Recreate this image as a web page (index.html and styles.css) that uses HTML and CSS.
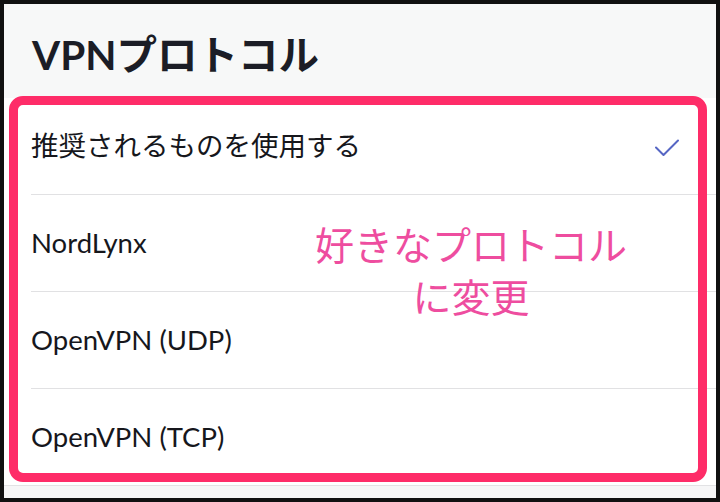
FILE: index.html
```html
<!DOCTYPE html>
<html lang="ja">
<head>
<meta charset="utf-8">
<title>VPNプロトコル</title>
<link rel="stylesheet" href="styles.css">
</head>
<body>
<div class="frame">
  <header class="header">
    <h1 class="title">VPNプロトコル</h1>
  </header>
  <ul class="list">
    <li class="row">
      <span class="label">推奨されるものを使用する</span>
      <svg class="check" width="24" height="17" viewBox="0 0 24 17" aria-hidden="true">
        <path d="M1 8.5 L8.5 16 L23 1.5" fill="none" stroke="#5666c4" stroke-width="2" stroke-linecap="round" stroke-linejoin="round"/>
      </svg>
    </li>
    <li class="row"><span class="label">NordLynx</span></li>
    <li class="row"><span class="label">OpenVPN (UDP)</span></li>
    <li class="row row-last"><span class="label">OpenVPN (TCP)</span></li>
  </ul>
  <div class="footer"></div>
  <div class="highlight"></div>
  <div class="note">好きなプロトコル<br>に変更</div>
</div>
</body>
</html>
```
FILE: styles.css
```css
html, body {
  margin: 0;
  padding: 0;
  background: #111;
}
.frame {
  position: relative;
  width: 720px;
  height: 502px;
  box-sizing: border-box;
  border: 4px solid #111;
  background: #f6f6f7;
  display: flex;
  flex-direction: column;
  overflow: hidden;
  font-family: Lato, "Noto Sans CJK JP", sans-serif;
}
.header {
  height: 94px;
  box-sizing: border-box;
  padding: 7px 0 0 28px;
  background: #f7f8f8;
  display: flex;
  align-items: center;
  flex-shrink: 0;
}
.title {
  margin: 0;
  font-size: 40.5px;
  font-weight: 700;
  line-height: 50px;
  color: #1b1d26;
  letter-spacing: 0;
}
.list {
  list-style: none;
  margin: 0;
  padding: 0;
  background: #fff;
  border-bottom: 1px solid #e2e2e4;
  flex-shrink: 0;
}
.row {
  height: 97px;
  box-sizing: border-box;
  margin-left: 27px;
  padding-right: 37px;
  border-bottom: 1px solid #e1e1e3;
  display: flex;
  align-items: center;
  justify-content: space-between;
}
.row-last {
  height: 96px;
  border-bottom: none;
}
.label {
  font-size: 27.5px;
  line-height: 34px;
  color: #16171c;
}
.check {
  display: block;
  margin-top: 2px;
}
.footer {
  flex: 1;
  background: #f6f6f7;
}
.highlight {
  position: absolute;
  left: 5px;
  top: 92px;
  width: 698px;
  height: 386px;
  box-sizing: border-box;
  border: 9px solid #fe2c68;
  border-radius: 14px;
}
.note {
  position: absolute;
  left: 267px;
  top: 213px;
  width: 400px;
  text-align: center;
  font-family: "Noto Sans CJK JP", sans-serif;
  font-size: 39px;
  line-height: 52px;
  color: #ee4d9f;
}
```
